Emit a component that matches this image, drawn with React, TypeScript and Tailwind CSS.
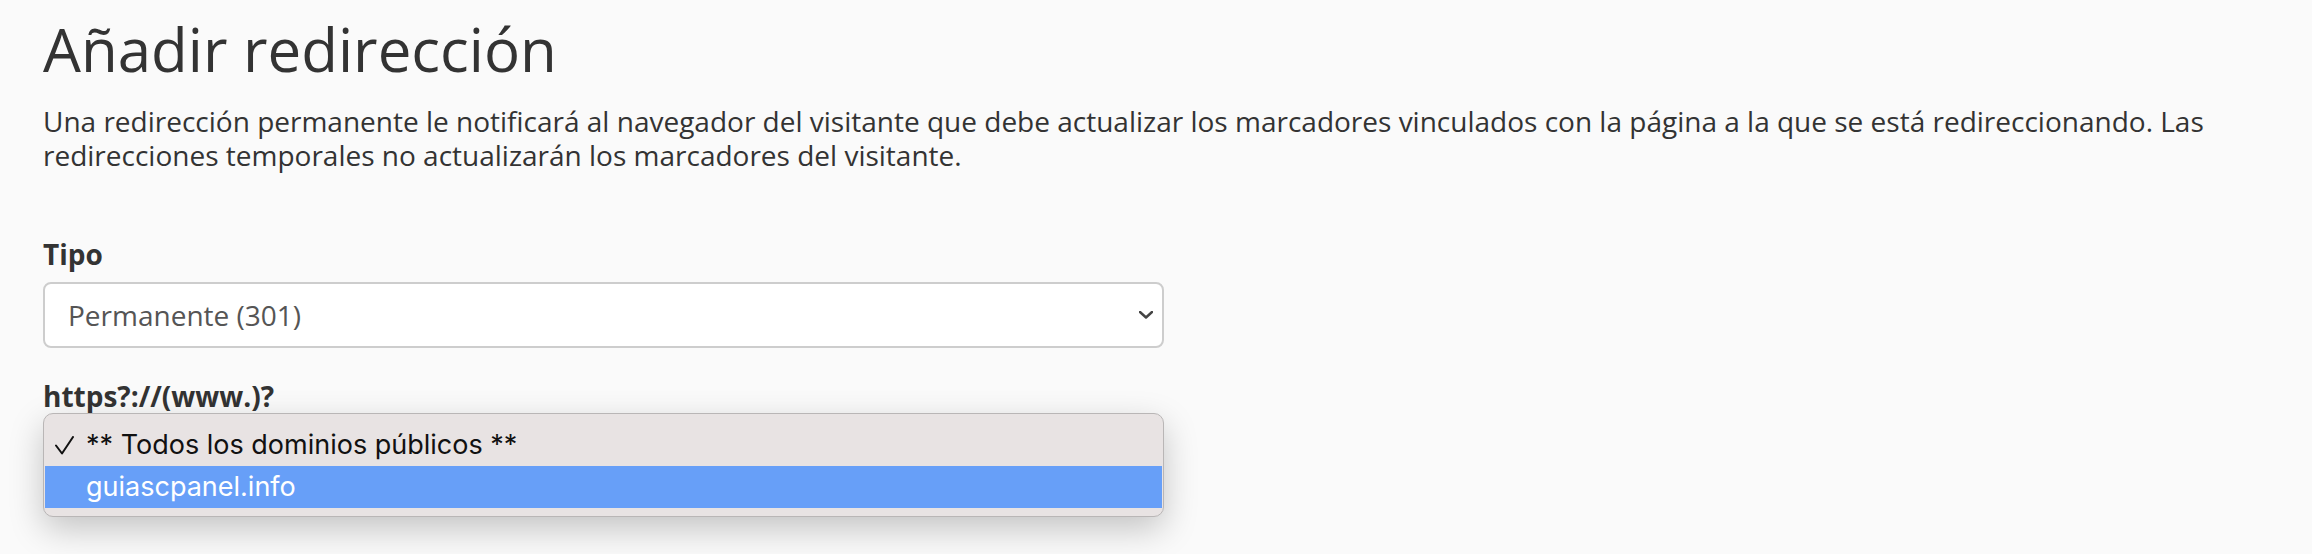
import React from "react";

function Chevron() {
  return (
    <svg width="14" height="8" viewBox="0 0 14 8" fill="none" aria-hidden="true">
      <path
        d="M1 1l6 5.5L13 1"
        stroke="#444"
        strokeWidth="2.4"
        strokeLinecap="round"
        strokeLinejoin="round"
      />
    </svg>
  );
}

function Check() {
  return (
    <svg width="19" height="19" viewBox="0 0 19 19" fill="none" aria-hidden="true">
      <path
        d="M1 9.5l6 8L18 1"
        stroke="#111"
        strokeWidth="2"
        strokeLinecap="round"
        strokeLinejoin="round"
      />
    </svg>
  );
}

const options = [
  { label: "** Todos los dominios públicos **", checked: true },
  { label: "guiascpanel.info", checked: false, active: true },
];

export default function App() {
  return (
    <div className="min-h-[554px] w-[2312px] bg-[#fafafa] pl-[43px] pr-[86px] pt-[13px] font-['Open_Sans',sans-serif] text-[#333]">
      <h1 className="text-[60px] font-normal leading-[72px] text-[#333]">
        Añadir redirección
      </h1>
      <p className="mt-[19px] text-[28px] leading-[34px]">
        Una redirección permanente le notificará al navegador del visitante que debe actualizar los
        marcadores vinculados con la página a la que se está redireccionando. Las redirecciones
        temporales no actualizarán los marcadores del visitante.
      </p>

      <div className="mt-[65px] w-[1121px]">
        <label className="block text-[28px] font-bold leading-[34px]">Tipo</label>
        <div className="mt-[11px] flex h-[66px] items-center justify-between rounded-[8px] border-2 border-[#cdcdcd] bg-white pl-[23px] pr-[9px]">
          <span className="text-[28px] text-[#555]">Permanente (301)</span>
          <Chevron />
        </div>

        <label className="mt-[31px] block text-[28px] font-bold leading-[34px]">
          https?://(www.)?
        </label>
        <div className="relative mt-[11px] h-[66px] rounded-[8px] border-2 border-[#5b9be6] bg-white">
          <div className="absolute -left-[2px] -top-[13px] w-[1121px] rounded-[10px] border border-[#b9b6b6] bg-[#e8e3e3] pb-[8px] pt-[10px] font-['Inter',sans-serif] shadow-[0_12px_34px_rgba(0,0,0,0.22)]">
            {options.map((o) => (
              <div
                key={o.label}
                className={`mx-px flex h-[42px] items-center text-[27px] ${
                  o.active ? "bg-[#679ff8] text-white" : "text-[#111]"
                }`}
              >
                <span className="flex w-[41px] justify-end pr-[12px]">
                  {o.checked ? <Check /> : null}
                </span>
                <span>{o.label}</span>
              </div>
            ))}
          </div>
        </div>
      </div>
    </div>
  );
}
